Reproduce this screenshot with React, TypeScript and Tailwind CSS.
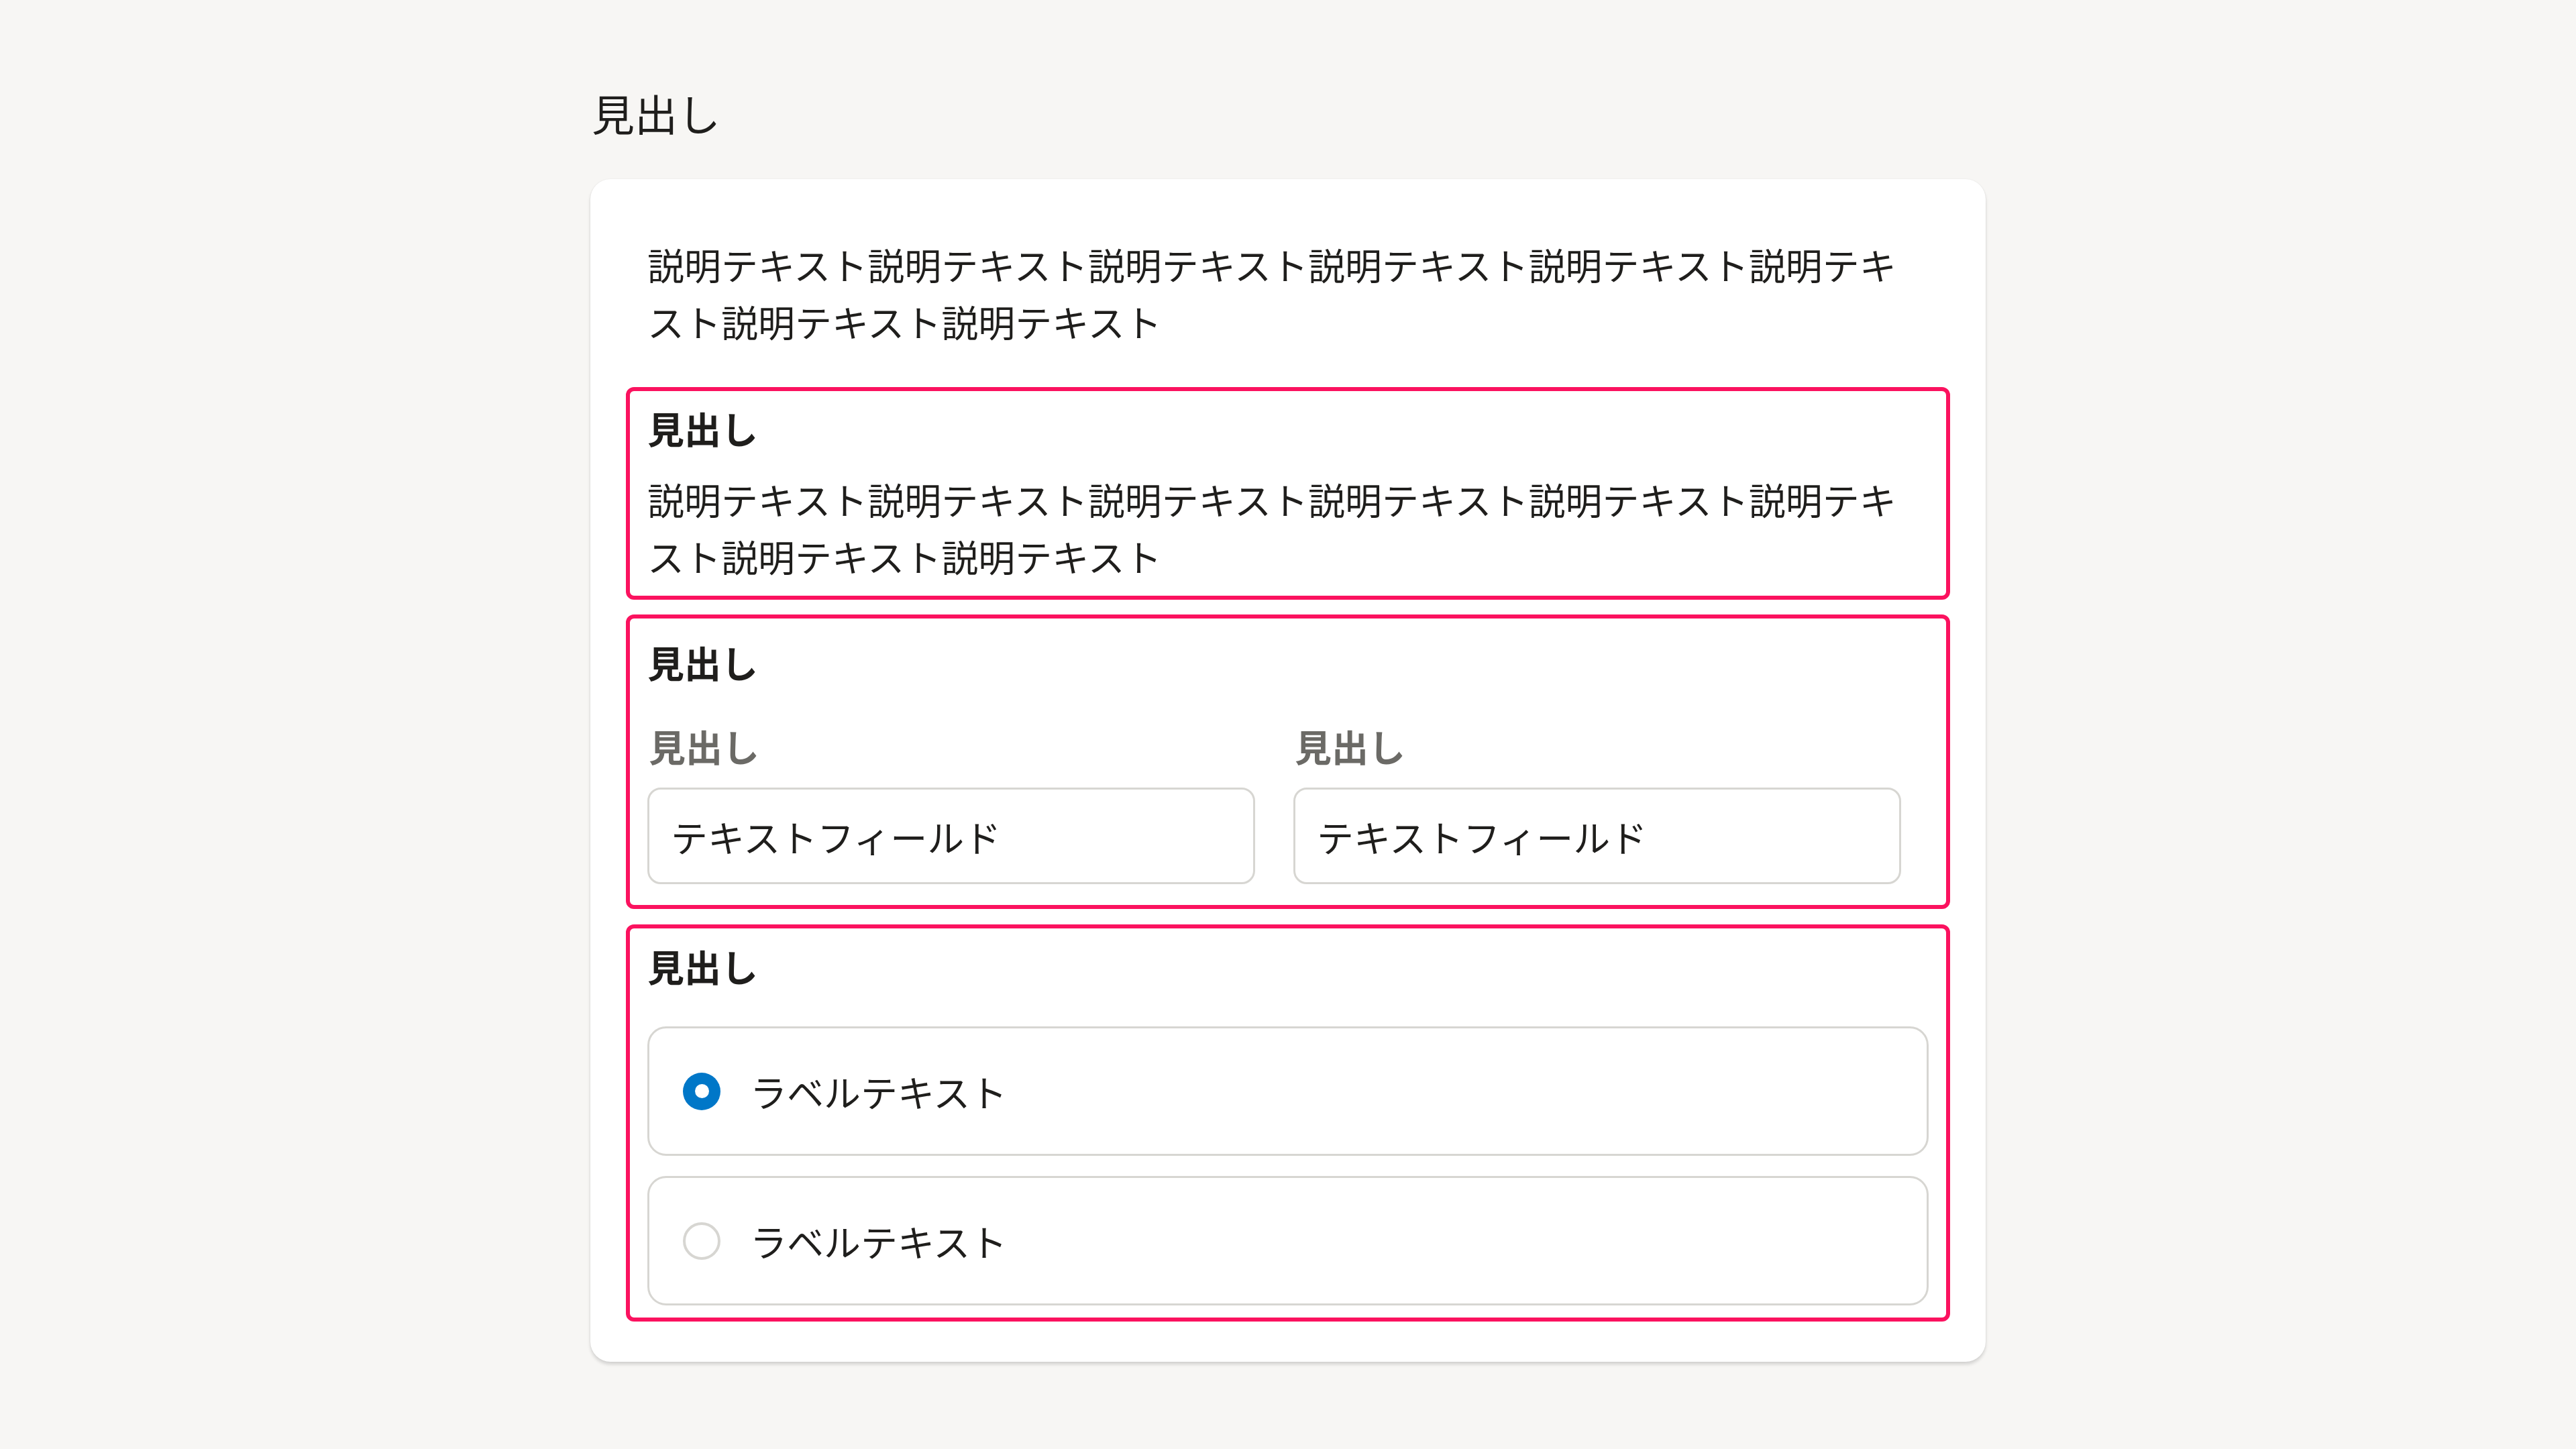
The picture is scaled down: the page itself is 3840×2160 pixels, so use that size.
import React from "react";

const font = "font-['Noto_Sans_CJK_JP','Noto_Sans',sans-serif]";

function Section({ children, className = "" }: { children: React.ReactNode; className?: string }) {
  return (
    <div className={`rounded-[12px] border-[6px] border-[#fb125f] px-[26px] ${className}`}>
      {children}
    </div>
  );
}

function Field({ label }: { label: string }) {
  return (
    <div className="flex w-[906px] flex-col">
      <div className="pl-[2px] text-[55px] font-bold leading-[85px] text-[#6b6a66]">{label}</div>
      <div className="mt-[20px] flex h-[144px] items-center rounded-[20px] border-[3px] border-[#d7d6d2] bg-white px-[32px] text-[55px] leading-[85px] text-[#1f1e1c]">
        テキストフィールド
      </div>
    </div>
  );
}

function RadioRow({ label, checked }: { label: string; checked?: boolean }) {
  return (
    <label className="flex h-[193px] items-center gap-[44px] rounded-[28px] border-[3px] border-[#d7d6d2] bg-white pl-[50px]">
      {checked ? (
        <span className="flex h-[56px] w-[56px] items-center justify-center rounded-full bg-[#0077c8]">
          <span className="h-[21px] w-[21px] rounded-full bg-white" />
        </span>
      ) : (
        <span className="h-[56px] w-[56px] rounded-full border-[4px] border-[#d7d6d2] bg-white" />
      )}
      <span className="text-[55px] leading-[85px] text-[#1f1e1c]">{label}</span>
    </label>
  );
}

export default function App() {
  const desc = "説明テキスト説明テキスト説明テキスト説明テキスト説明テキスト説明テキスト説明テキスト説明テキスト";

  return (
    <div className={`min-h-screen bg-[#f7f6f4] ${font} text-[#1f1e1c]`}>
      <div className="mx-auto w-[2080px] pt-[119px]">
        <h1 className="pl-[2px] text-[64px] font-normal leading-[96px]">見出し</h1>

        <div className="mt-[52px] rounded-[30px] bg-white px-[53px] pt-[84px] pb-[60px] shadow-[0_4px_5px_rgba(0,0,0,0.14),0_0_2px_rgba(0,0,0,0.08)]">
          {/* Description */}
          <p className="px-[32px] text-[55px] leading-[85px]">{desc}</p>

          <div className="mt-[56px] flex flex-col gap-[22px]">
            {/* Heading + text */}
            <Section className="pt-[12px] pb-[17px]">
              <h2 className="text-[55px] font-bold leading-[85px]">見出し</h2>
              <p className="mt-[21px] text-[55px] leading-[85px]">{desc}</p>
            </Section>

            {/* Text fields */}
            <Section className="pt-[22px] pb-[31px]">
              <h2 className="text-[55px] font-bold leading-[85px]">見出し</h2>
              <div className="mt-[40px] flex gap-[57px]">
                <Field label="見出し" />
                <Field label="見出し" />
              </div>
            </Section>

            {/* Radios */}
            <Section className="mt-[1px] pt-[13px] pb-[18px]">
              <h2 className="text-[55px] font-bold leading-[85px]">見出し</h2>
              <div className="mt-[48px] flex flex-col gap-[30px]">
                <RadioRow label="ラベルテキスト" checked />
                <RadioRow label="ラベルテキスト" />
              </div>
            </Section>
          </div>
        </div>
      </div>
    </div>
  );
}
